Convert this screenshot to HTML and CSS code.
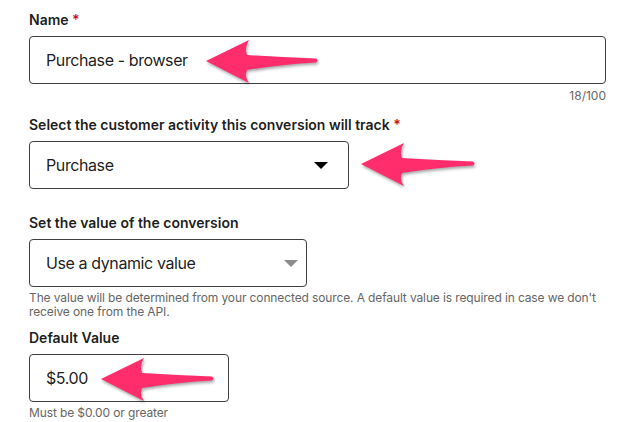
FILE: index.html
```html
<!DOCTYPE html>
<html lang="en">
<head>
    <meta charset="UTF-8">
    <title>Conversion settings</title>
    <link rel="stylesheet" href="styles.css">
</head>
<body>
    <div class="form">
        <!-- Name -->
        <div class="group group-name">
            <label class="label">Name <span class="req">*</span></label>
            <div class="field field-wide">
                <span class="value">Purchase - browser</span>
                <svg class="arrow arrow-name" width="120" height="50" viewBox="0 0 120 50"><path d="M2 24 L45 3 Q40 11 43 18 Q80 20 112 21.5 Q115 23.5 112 25.5 Q80 27 43 33 Q40 40 45 46 Z"/></svg>
            </div>
            <div class="counter">18/100</div>
        </div>

        <!-- Activity -->
        <div class="group group-activity">
            <label class="label">Select the customer activity this conversion will track <span class="req">*</span></label>
            <div class="field field-select">
                <span class="value">Purchase</span>
                <span class="caret"></span>
                <svg class="arrow arrow-activity" width="120" height="50" viewBox="0 0 120 50"><path d="M2 24 L45 3 Q40 11 43 18 Q80 20 114 21.5 Q117 23.5 114 25.5 Q80 27 43 33 Q40 40 45 46 Z"/></svg>
            </div>
        </div>

        <!-- Value type -->
        <div class="group group-type">
            <label class="label">Set the value of the conversion</label>
            <div class="field field-dynamic">
                <span class="value">Use a dynamic value</span>
                <span class="caret caret-muted"></span>
            </div>
            <p class="help">The value will be determined from your connected source. A default value is required in case we don't receive one from the API.</p>
        </div>

        <!-- Default value -->
        <div class="group group-default">
            <label class="label">Default Value</label>
            <div class="field field-money">
                <span class="value">$5.00</span>
                <svg class="arrow arrow-money" width="120" height="50" viewBox="0 0 120 50"><path d="M2 24 L45 3 Q40 11 43 18 Q80 20 113 21.5 Q116 23.5 113 25.5 Q80 27 43 33 Q40 40 45 46 Z"/></svg>
            </div>
            <p class="help">Must be $0.00 or greater</p>
        </div>
    </div>
</body>
</html>
```

FILE: styles.css
```css
body {
    margin: 0;
    font-family: Inter, "Noto Sans", sans-serif;
    color: rgba(0, 0, 0, 0.9);
    background: #ffffff;
}
.form {
    width: 577px;
    padding: 10px 0 0 29px;
}
.group {
    display: flex;
    flex-direction: column;
}
.label {
    font-size: 14px;
    line-height: 20px;
    font-weight: 600;
    margin-bottom: 6px;
}
.req {
    color: #cc1016;
}
.field {
    position: relative;
    box-sizing: border-box;
    height: 48px;
    border: 1px solid #404040;
    border-radius: 4px;
    display: flex;
    align-items: center;
    padding: 0 16px;
    font-size: 16px;
    letter-spacing: -0.4px;
}
.field-wide {
    width: 577px;
}
.field-select {
    width: 320px;
    justify-content: space-between;
    padding-right: 20px;
}
.field-dynamic {
    width: 278px;
    justify-content: space-between;
    padding-right: 8px;
}
.field-money {
    width: 200px;
}
.caret {
    width: 0;
    height: 0;
    border-left: 7px solid transparent;
    border-right: 7px solid transparent;
    border-top: 7px solid #000000;
}
.caret-muted {
    border-top-color: #8c8c8c;
}
.counter {
    align-self: flex-end;
    font-size: 12px;
    line-height: 14px;
    color: #666666;
    margin-top: 5px;
}
.help {
    margin: 4px 0 0;
    font-size: 12px;
    line-height: 14px;
    letter-spacing: -0.12px;
    color: #666666;
    width: 580px;
}
.group-activity {
    margin-top: 12px;
}
.group-type {
    margin-top: 24px;
}
.group-default {
    margin-top: 9px;
}
.arrow {
    position: absolute;
    fill: #ff2d6c;
    filter: drop-shadow(1px 2px 1.5px rgba(0, 0, 0, 0.35));
}
.arrow-name {
    left: 174px;
    top: 0;
}
.arrow-activity {
    left: 329px;
    top: -2px;
}
.arrow-money {
    left: 69px;
    top: 0;
}
```
